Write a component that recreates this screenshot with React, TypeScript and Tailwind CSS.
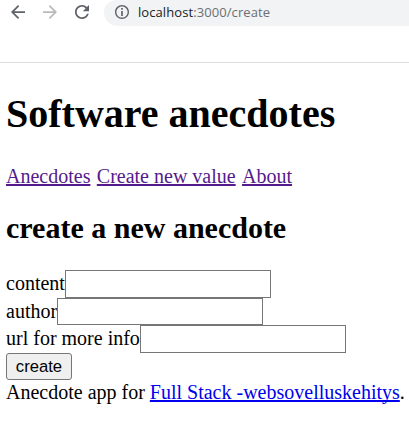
import React from 'react';

const link = 'underline decoration-2 underline-offset-[1px] [text-decoration-skip-ink:none]';

function Row({ label, width, height }: { label: string; width: string; height: string }) {
  return (
    <label className={`flex items-center ${height}`}>
      <span className={`${width} shrink-0 whitespace-nowrap pb-0.5`}>{label}</span>
      <input className="h-full w-[206px] shrink-0 border border-[#767676] bg-white px-1 text-base outline-none" />
    </label>
  );
}

export default function App() {
  return (
    <div className="h-[430px] w-[409px] overflow-hidden bg-white">
      <header className="h-[63px] border-b border-[#dadce0]">
        <div className="flex h-[26px] bg-white">
          <svg width="104" height="26" className="shrink-0" fill="#5f6368">
            <path transform="translate(7.5 1.5) scale(.875)" d="M20 11H7.83l5.59-5.59L12 4l-8 8 8 8 1.41-1.41L7.83 13H20v-2z" />
            <path transform="translate(39.5 1.5) scale(.875)" fill="#bababa" d="M12 4l-1.41 1.41L16.17 11H4v2h12.17l-5.58 5.59L12 20l8-8z" />
            <path transform="translate(71.5 1.5) scale(.875)" d="M17.65 6.35C16.2 4.9 14.21 4 12 4c-4.42 0-7.99 3.58-7.99 8s3.57 8 7.99 8c3.73 0 6.84-2.55 7.73-6h-2.08c-.82 2.33-3.04 4-5.65 4-3.31 0-6-2.69-6-6s2.69-6 6-6c1.66 0 3.14.69 4.22 1.78L13 11h7V4l-2.35 2.35z" />
          </svg>
          <div className="flex-1 overflow-hidden rounded-bl-[14px] rounded-tl-[12px] bg-[#f1f3f4]">
            <div className="flex h-[24px] items-center pl-[11px]">
              <svg width="14" height="14" viewBox="2 2 20 20" className="mr-[9px] shrink-0" fill="#5f6368">
                <path d="M10.8 6.3h2.4v2.4h-2.4zm0 4.2h2.4v7.2h-2.4zM12 2C6.48 2 2 6.48 2 12s4.48 10 10 10 10-4.48 10-10S17.52 2 12 2zm0 18c-4.41 0-8-3.59-8-8s3.59-8 8-8 8 3.59 8 8-3.59 8-8 8z" />
              </svg>
              <span className="whitespace-nowrap pt-0.5 font-['Open_Sans',sans-serif] text-[13px] tracking-[0.08px] text-[#6b6f73]"><span className="text-[#202124]">localhost</span>:3000/create</span>
            </div>
          </div>
        </div>
      </header>
      <main className="pl-[6px] font-['Liberation_Serif',serif] text-[20px] leading-[22px] text-black">
        <h1 className="pt-[28px] text-[40px] font-bold leading-[46px]">Software anecdotes</h1>
        <nav className="flex gap-[6.4px] pt-[28px] text-[#551a8b]">
          <a className={link}>Anecdotes</a>
          <a className={link}>Create new value</a>
          <a className={link}>About</a>
        </nav>
        <h2 className="pt-[24px] text-[30px] font-bold leading-[34px]">create a new anecdote</h2>
        <form className="pt-[25px]">
          <Row label="content" width="w-[59px]" height="h-[28px]" />
          <Row label="author" width="w-[51px]" height="h-[27px]" />
          <Row label="url for more info" width="w-[134px]" height="h-[28px]" />
          <button type="button" className="block h-[27px] w-[66px] rounded-[3px] border border-[#767676] bg-[#efefef] font-['Liberation_Sans',sans-serif] text-[16.67px]">create</button>
        </form>
        <footer className="whitespace-nowrap pt-px">Anecdote app for <a className={`${link} text-[#0000ee]`}>Full Stack -websovelluskehitys</a>.</footer>
      </main>
    </div>
  );
}
